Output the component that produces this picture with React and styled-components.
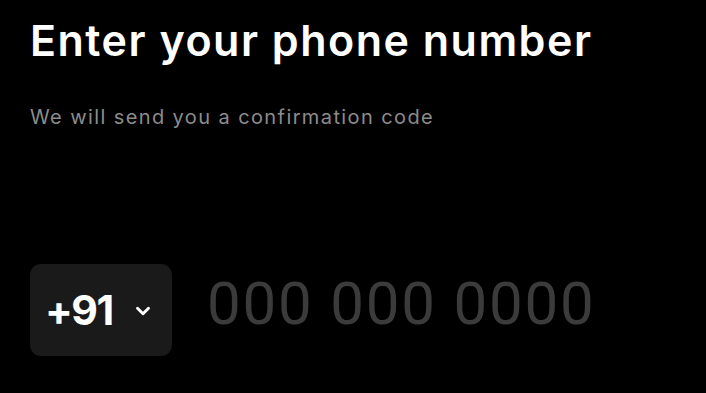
import React from "react";
import styled, { createGlobalStyle } from "styled-components";

const GlobalStyle = createGlobalStyle`
  html, body {
    margin: 0;
    padding: 0;
    background: #000;
  }
`;

const Screen = styled.div`
  width: 706px;
  height: 393px;
  box-sizing: border-box;
  padding: 14px 30px 0 30px;
  background: #000;
  display: flex;
  flex-direction: column;
  font-family: Inter, "Noto Sans", sans-serif;
`;

const Title = styled.h1`
  margin: 0;
  color: #fff;
  font-size: 43px;
  font-weight: 600;
  line-height: 52px;
  letter-spacing: 1.5px;
`;

const Subtitle = styled.p`
  margin: 39px 0 0 0;
  color: #8c8c8c;
  font-size: 20px;
  font-weight: 400;
  line-height: 24px;
  letter-spacing: 1.4px;
`;

const PhoneRow = styled.div`
  display: flex;
  align-items: center;
  gap: 35px;
  margin-top: 135px;
`;

const CodeButton = styled.button`
  width: 142px;
  height: 92px;
  border: none;
  border-radius: 11px;
  background: #1a1a1a;
  color: #fff;
  display: flex;
  align-items: center;
  justify-content: flex-start;
  gap: 19px;
  padding: 0 0 0 15px;
  font-family: Inter, "Noto Sans", sans-serif;
  font-size: 41px;
  font-weight: 700;
  letter-spacing: -1.5px;
  cursor: pointer;
`;

const Chevron = styled.svg`
  width: 22px;
  height: 22px;
  margin-top: 2px;
`;

const NumberInput = styled.input`
  width: 420px;
  border: none;
  outline: none;
  background: transparent;
  padding: 0;
  margin-bottom: 14px;
  font-family: Roboto, "Noto Sans", sans-serif;
  font-size: 60px;
  font-weight: 400;
  letter-spacing: 1.8px;
  color: #fff;
  &::placeholder {
    color: #3b3b3b;
  }
`;

export default function App() {
  return (
    <>
      <GlobalStyle />
      <Screen>
        <Title>Enter your phone number</Title>
        <Subtitle>We will send you a confirmation code</Subtitle>
        <PhoneRow>
          <CodeButton>
            +91
            <Chevron viewBox="0 0 24 24" fill="none" stroke="#fff" strokeWidth="3.2" strokeLinecap="round" strokeLinejoin="round">
              <path d="M6 9l6 6 6-6" />
            </Chevron>
          </CodeButton>
          <NumberInput placeholder="000 000 0000" />
        </PhoneRow>
      </Screen>
    </>
  );
}
